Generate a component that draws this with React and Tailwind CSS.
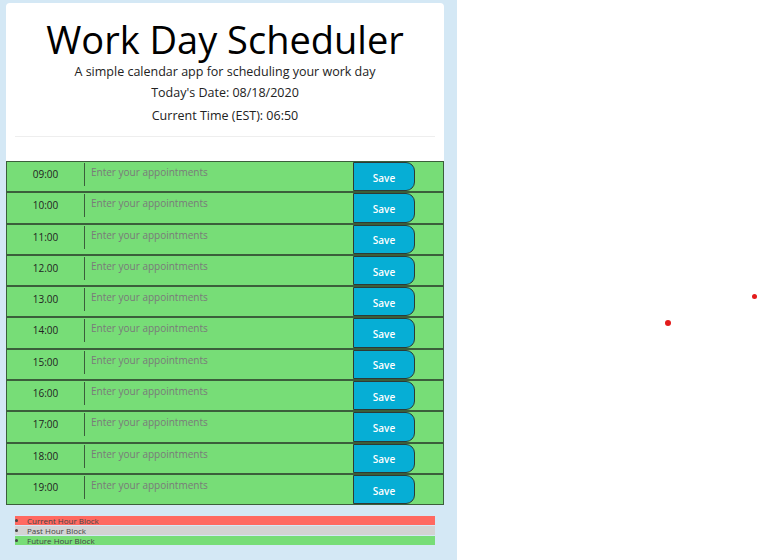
import React from 'react';

const hours = ['09:00', '10:00', '11:00', '12.00', '13.00', '14:00', '15:00', '16:00', '17:00', '18:00', '19:00'];

const HourRow = ({ hour }) => (
  <div className="flex h-[31.3px] border-y border-[#3b5e3b] bg-[#77dd77]">
    <div className="w-[78px] h-[23px] mt-[1px] border-r border-[#3b5e3b] flex items-center justify-center text-[10px] text-[#222]">
      {hour}
    </div>
    <textarea
      className="flex-1 h-full resize-none bg-transparent px-[6px] pt-[4px] text-[10px] leading-[12px] outline-none placeholder:text-[#7a7a7a]"
      placeholder="Enter your appointments"
    />
    <button className="w-[62px] h-full bg-[#06aed5] text-white text-[10px] font-semibold rounded-r-[9px] border border-[#2e3a35] pt-[3px]">
      Save
    </button>
    <div className="w-[28px]" />
  </div>
);

const App = () => {
  return (
    <div className="flex min-h-[560px] font-['Open_Sans',sans-serif]">
      <div className="w-[457px] bg-[#d4e8f5] pl-[6px] pr-[13px] pt-[3px] pb-4">
        <header className="bg-white rounded-t-[4px] text-center pt-[13px] pb-[24px] px-[9px]">
          <h1 className="text-[38px] leading-[47px] text-black">Work Day Scheduler</h1>
          <p className="text-[12.5px] leading-[18px] text-[#222]">A simple calendar app for scheduling your work day</p>
          <p className="text-[12.5px] leading-[18px] mt-[3px] text-[#222]">Today's Date: 08/18/2020</p>
          <p className="text-[12.5px] leading-[18px] mt-[5px] text-[#222]">Current Time (EST): 06:50</p>
          <hr className="mt-[11px] border-[#eeeeee]" />
        </header>
        <div className="border-x border-[#3b5e3b]">
          {hours.map((h) => (
            <HourRow key={h} hour={h} />
          ))}
        </div>
        <ul className="list-disc list-inside mt-[11px] mx-[9px] text-[8px] leading-[9px] text-[#444]">
          <li className="bg-[#ff6961] mb-[1px]">Current Hour Block</li>
          <li className="bg-[#d3d3d3] mb-[1px]">Past Hour Block</li>
          <li className="bg-[#77dd77]">Future Hour Block</li>
        </ul>
      </div>
      <div className="relative flex-1 bg-white">
        <span className="absolute left-[208px] top-[320px] w-[6px] h-[6px] rounded-full bg-[#e31b1b]" />
        <span className="absolute left-[295px] top-[294px] w-[5px] h-[5px] rounded-full bg-[#e31b1b]" />
      </div>
    </div>
  );
};

export default App;
